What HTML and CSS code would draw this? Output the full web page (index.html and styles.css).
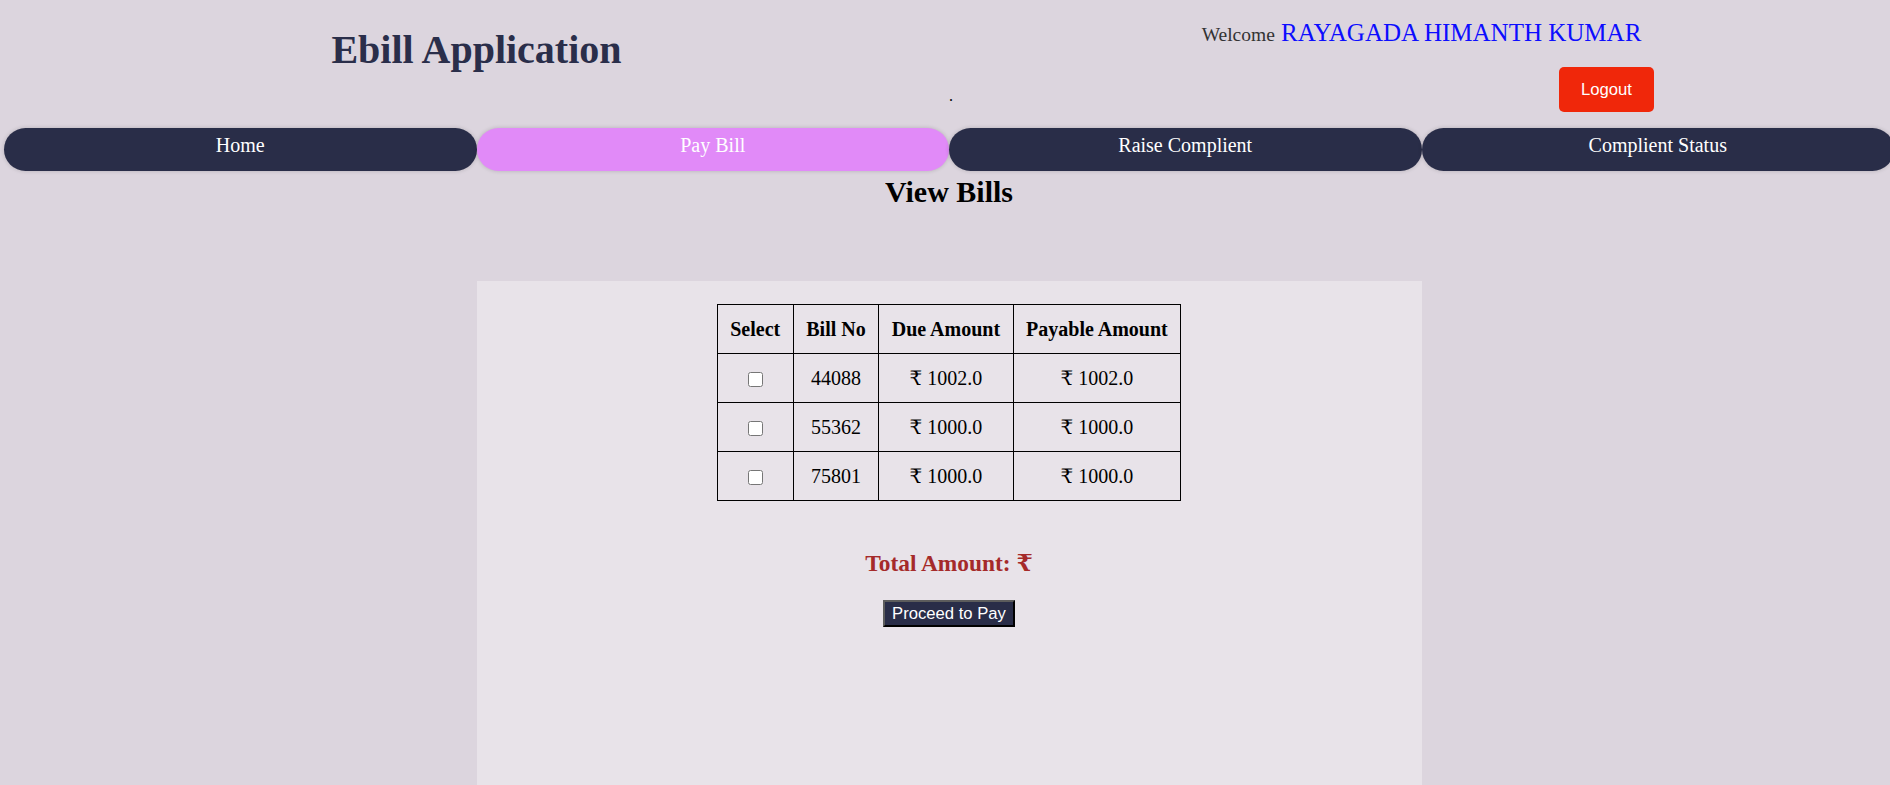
FILE: index.html
```html
<!DOCTYPE html>
<html lang="en">
<head>
<meta charset="utf-8">
<title>Ebill Application</title>
<link rel="stylesheet" href="styles.css">
</head>
<body>
<div class="page">
  <header class="top">
    <div class="brand"><h1>Ebill Application</h1></div>
    <div class="user">
      <p class="welcome"><span class="greet">Welcome</span> <span class="name">RAYAGADA HIMANTH KUMAR</span></p>
      <div class="actions">
        <span class="dot">.</span>
        <button class="logout" type="button">Logout</button>
      </div>
    </div>
  </header>
  <nav class="tabs">
    <a class="tab" href="#">Home</a>
    <a class="tab active" href="#">Pay Bill</a>
    <a class="tab" href="#">Raise Complient</a>
    <a class="tab" href="#">Complient Status</a>
  </nav>
  <h2 class="title">View Bills</h2>
  <main class="panel">
    <table class="bills">
      <thead>
        <tr><th>Select</th><th>Bill No</th><th>Due Amount</th><th>Payable Amount</th></tr>
      </thead>
      <tbody>
        <tr><td><input class="check" type="checkbox"></td><td>44088</td><td>₹ 1002.0</td><td>₹ 1002.0</td></tr>
        <tr><td><input class="check" type="checkbox"></td><td>55362</td><td>₹ 1000.0</td><td>₹ 1000.0</td></tr>
        <tr><td><input class="check" type="checkbox"></td><td>75801</td><td>₹ 1000.0</td><td>₹ 1000.0</td></tr>
      </tbody>
    </table>
    <h3 class="total">Total Amount: ₹</h3>
    <button class="pay" type="button">Proceed to Pay</button>
  </main>
</div>
</body>
</html>
```
FILE: styles.css
```css
html, body {
  margin: 0;
  padding: 0;
  overflow: hidden;
  background: #dcd5de;
}

.page {
  margin-left: 4px;
  width: 1890px;
  font-family: "Liberation Serif", "Times New Roman", "DejaVu Serif", serif;
  color: #000;
}

.top {
  display: flex;
  height: 128px;
}

.brand {
  width: 50%;
  text-align: center;
}

.brand h1 {
  margin: 26.5px 0 0;
  font-size: 40px;
  line-height: 46px;
  font-weight: bold;
  color: #2a2e4a;
}

.user {
  width: 50%;
  display: flex;
  flex-direction: column;
}

.welcome {
  margin: 19px 0 0;
  text-align: center;
  font-size: 25px;
  line-height: 28px;
  color: #333;
}

.greet {
  font-size: 19.5px;
}

.name {
  color: #0d0dff;
}

.actions {
  display: flex;
  justify-content: space-between;
  align-items: flex-start;
  margin-top: 18px;
  padding-right: 240px;
}

.dot {
  margin-top: 20px;
  font-size: 16px;
  line-height: 18px;
  color: #000;
}

.logout {
  width: 95px;
  height: 45px;
  border: 0;
  border-radius: 5px;
  background: #f0270a;
  color: #fff;
  font-family: "Liberation Sans", Arial, sans-serif;
  font-size: 16.67px;
  padding: 0;
}

.tabs {
  display: flex;
  height: 43px;
}

.tab {
  flex: 0 0 25%;
  box-sizing: border-box;
  height: 43px;
  padding-top: 6px;
  border-radius: 22px;
  background: #292d48;
  color: #fff;
  text-align: center;
  text-decoration: none;
  font-size: 20px;
  line-height: 23px;
  box-shadow: 0 0 4px rgba(0, 0, 0, 0.18);
}

.tab.active {
  background: #e18af8;
}

.title {
  margin: 4px 0 0;
  font-size: 30px;
  line-height: 34.5px;
  text-align: center;
  font-weight: bold;
}

.panel {
  display: flex;
  flex-direction: column;
  align-items: center;
  width: 50%;
  min-height: 520px;
  margin: 71px auto 0;
  padding-top: 23.5px;
  background: #e8e3e9;
}

.bills {
  border-collapse: collapse;
  font-size: 20px;
  line-height: 23px;
}

.bills th,
.bills td {
  border: 1px solid #000;
  padding: 12.5px;
  text-align: center;
}

.bills th {
  font-weight: bold;
}

.check {
  width: 15px;
  height: 15px;
  margin: 0;
  vertical-align: middle;
}

.total {
  margin: 49px 0 23.4px;
  font-size: 23.4px;
  line-height: 27px;
  font-weight: bold;
  color: #a52a2a;
}

.pay {
  padding: 2px 7px;
  border: 2px solid;
  border-color: #5c5c5c #000 #000 #5c5c5c;
  background: #292d48;
  color: #fff;
  font-family: "Liberation Sans", Arial, sans-serif;
  font-size: 16.67px;
  line-height: 19px;
}
```
